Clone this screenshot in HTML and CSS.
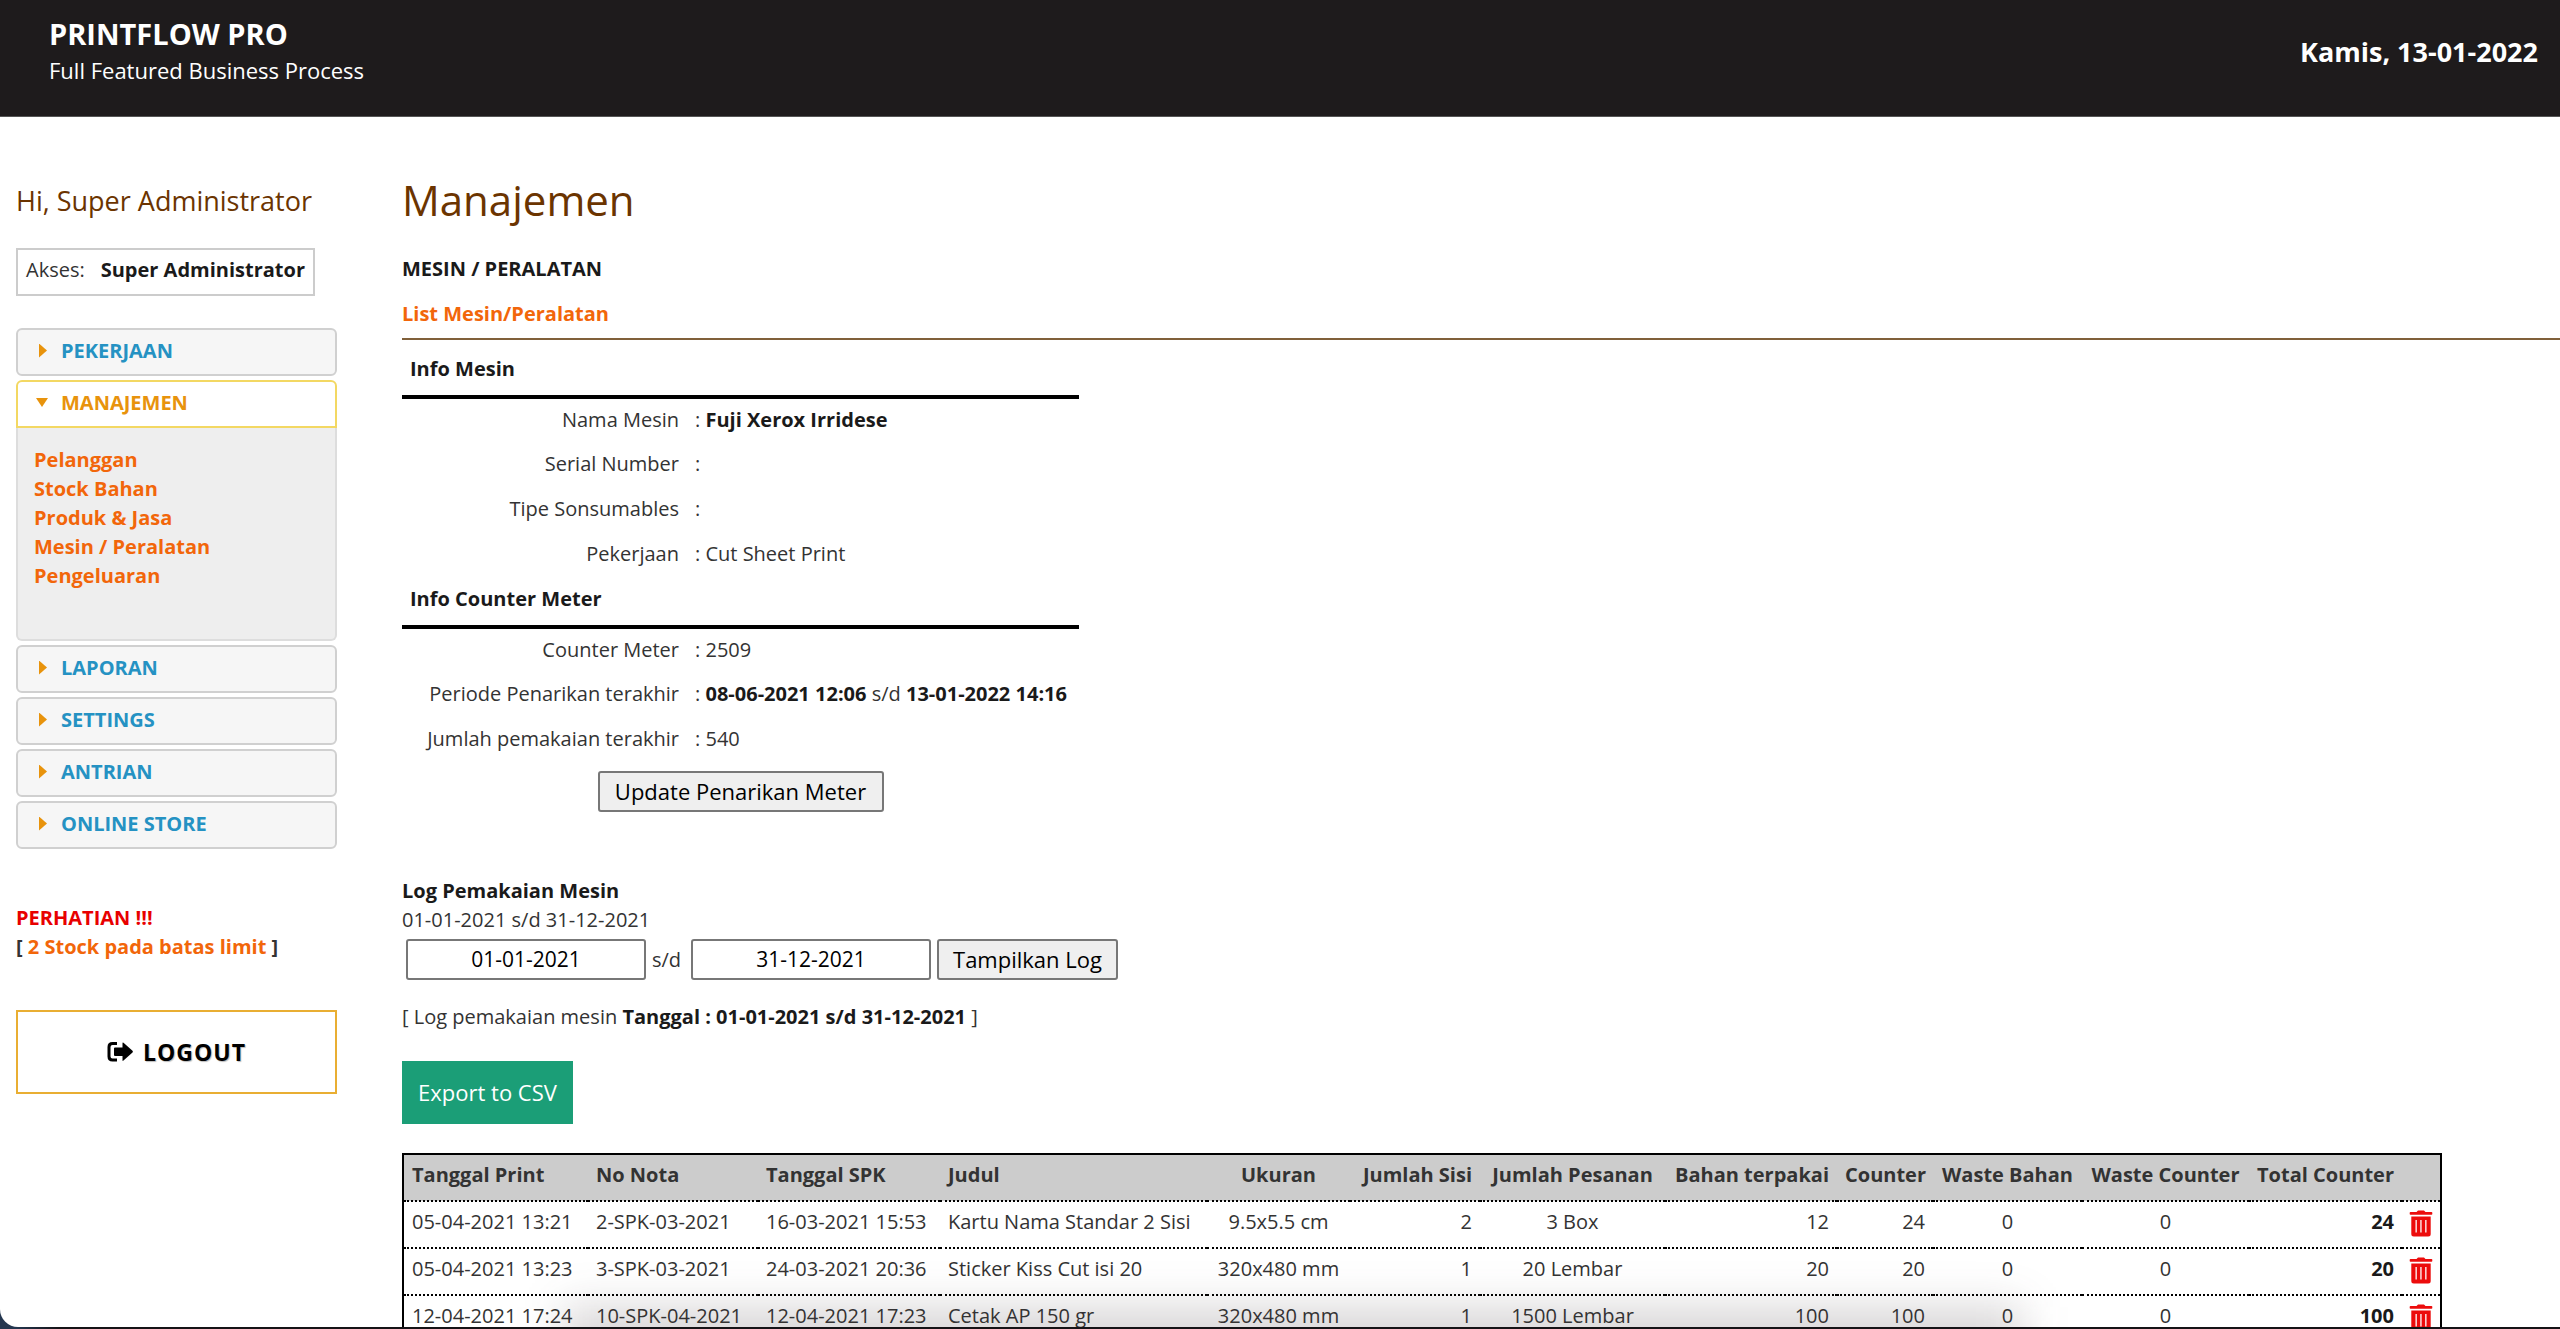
FILE: index.html
```
<!DOCTYPE html>
<html lang="id">
<head>
<meta charset="utf-8">
<title>Printflow Pro - Manajemen</title>
<link rel="stylesheet" href="styles.css">
</head>
<body>
<svg width="0" height="0" class="sprite" aria-hidden="true">
  <symbol id="trash" viewBox="0 0 24 27">
    <path fill="#ec0c0c" fill-rule="evenodd" d="M1.500 2H7.500L9 .5h6L16.500 2h6q.8 0 .8.800V4q0 .8-.8.800h-21Q.7 4.800.7 4V2.800Q.7 2 1.500 2ZM2.300 6.400h19.400v17.600q0 2.500-2.500 2.500H4.800Q2.300 26.500 2.300 24ZM6.500 10v12.500h1.300V10ZM11.300 10v12.500h1.300V10ZM16.200 10v12.500h1.300V10Z"/>
  </symbol>
</svg>
<div class="window">
  <header class="topbar">
    <div>
      <h1 class="brand">PRINTFLOW PRO</h1>
      <p class="tagline">Full Featured Business Process</p>
    </div>
    <p class="today">Kamis, 13-01-2022</p>
  </header>

  <div class="layout">
    <aside class="sidebar">
      <h2 class="greeting">Hi, Super Administrator</h2>
      <p class="access"><span>Akses:</span><b>Super Administrator</b></p>

      <nav class="menu">
        <button type="button" class="menu-head"><span class="arrow"></span>PEKERJAAN</button>
        <div class="menu-group">
          <button type="button" class="menu-head open" aria-expanded="true"><span class="arrow down"></span>MANAJEMEN</button>
          <div class="menu-panel">
            <a href="#pelanggan">Pelanggan</a>
            <a href="#stock">Stock Bahan</a>
            <a href="#produk">Produk &amp; Jasa</a>
            <a href="#mesin">Mesin / Peralatan</a>
            <a href="#pengeluaran">Pengeluaran</a>
          </div>
        </div>
        <button type="button" class="menu-head"><span class="arrow"></span>LAPORAN</button>
        <button type="button" class="menu-head"><span class="arrow"></span>SETTINGS</button>
        <button type="button" class="menu-head"><span class="arrow"></span>ANTRIAN</button>
        <button type="button" class="menu-head"><span class="arrow"></span>ONLINE STORE</button>
      </nav>

      <div class="notice">
        <p class="alert">PERHATIAN !!!</p>
        <p>[ <a href="#limit">2 Stock pada batas limit</a> ]</p>
      </div>

      <button type="button" class="logout">
        <svg width="27" height="22" viewBox="0 0 27 22" aria-hidden="true">
          <path d="M10 2.500H5.500Q2 2.500 2 6v9.500Q2 19 5.500 19H10" fill="none" stroke="#000" stroke-width="3"/>
          <path d="M8 6.500h7.500V2.200q0-1.200 1-.4l9 8q.9.900 0 1.800l-9 8q-1 .8-1-.4V15H8q-1 0-1-1V7.500q0-1 1-1Z"/>
        </svg>
        LOGOUT
      </button>
    </aside>

    <main class="content">
      <h2 class="page-title">Manajemen</h2>
      <h3 class="section">MESIN / PERALATAN</h3>
      <p class="crumb"><a href="#list">List Mesin/Peralatan</a></p>

      <table class="info">
        <colgroup><col class="info-label"><col class="info-value"></colgroup>
        <tbody>
          <tr><th colspan="2" class="info-head">Info Mesin</th></tr>
          <tr><th scope="row">Nama Mesin</th><td>: <b>Fuji Xerox Irridese</b></td></tr>
          <tr><th scope="row">Serial Number</th><td>:</td></tr>
          <tr><th scope="row">Tipe Sonsumables</th><td>:</td></tr>
          <tr><th scope="row">Pekerjaan</th><td>: Cut Sheet Print</td></tr>
          <tr><th colspan="2" class="info-head">Info Counter Meter</th></tr>
          <tr><th scope="row">Counter Meter</th><td>: 2509</td></tr>
          <tr><th scope="row">Periode Penarikan terakhir</th><td>: <b>08-06-2021 12:06</b> s/d <b>13-01-2022 14:16</b></td></tr>
          <tr><th scope="row">Jumlah pemakaian terakhir</th><td>: 540</td></tr>
          <tr><td colspan="2" class="info-action"><button type="button" class="btn btn-update">Update Penarikan Meter</button></td></tr>
        </tbody>
      </table>

      <h3 class="log-title">Log Pemakaian Mesin</h3>
      <p>01-01-2021 s/d 31-12-2021</p>
      <form class="filter">
        <input type="text" id="from" value="01-01-2021" aria-label="Tanggal awal">
        <label for="to">s/d</label>
        <input type="text" id="to" value="31-12-2021">
        <button type="button" class="btn btn-show">Tampilkan Log</button>
      </form>
      <p class="period">[ Log pemakaian mesin <b>Tanggal : 01-01-2021 s/d 31-12-2021</b> ]</p>
      <button type="button" class="export">Export to CSV</button>

      <table class="log">
        <colgroup>
          <col class="c-print"><col class="c-nota"><col class="c-spk"><col class="c-judul"><col class="c-ukuran"><col class="c-sisi"><col class="c-pesanan"><col class="c-bahan"><col class="c-counter"><col class="c-wbahan"><col class="c-wcounter"><col class="c-total"><col class="c-del">
        </colgroup>
        <thead>
          <tr><th>Tanggal Print</th><th>No Nota</th><th>Tanggal SPK</th><th>Judul</th><th class="mid">Ukuran</th><th class="num">Jumlah Sisi</th><th class="mid">Jumlah Pesanan</th><th class="num">Bahan terpakai</th><th class="num">Counter</th><th class="mid">Waste Bahan</th><th class="mid">Waste Counter</th><th class="num">Total Counter</th><th></th></tr>
        </thead>
        <tbody>
          <tr><td>05-04-2021 13:21</td><td>2-SPK-03-2021</td><td>16-03-2021 15:53</td><td>Kartu Nama Standar 2 Sisi</td><td class="mid">9.5x5.5 cm</td><td class="num">2</td><td class="mid">3 Box</td><td class="num">12</td><td class="num">24</td><td class="mid">0</td><td class="mid">0</td><td class="num"><b>24</b></td><td class="del"><a href="#hapus-1" aria-label="Hapus"><svg width="24" height="27"><use href="#trash"/></svg></a></td></tr>
          <tr><td>05-04-2021 13:23</td><td>3-SPK-03-2021</td><td>24-03-2021 20:36</td><td>Sticker Kiss Cut isi 20</td><td class="mid">320x480 mm</td><td class="num">1</td><td class="mid">20 Lembar</td><td class="num">20</td><td class="num">20</td><td class="mid">0</td><td class="mid">0</td><td class="num"><b>20</b></td><td class="del"><a href="#hapus-2" aria-label="Hapus"><svg width="24" height="27"><use href="#trash"/></svg></a></td></tr>
          <tr><td>12-04-2021 17:24</td><td>10-SPK-04-2021</td><td>12-04-2021 17:23</td><td>Cetak AP 150 gr</td><td class="mid">320x480 mm</td><td class="num">1</td><td class="mid">1500 Lembar</td><td class="num">100</td><td class="num">100</td><td class="mid">0</td><td class="mid">0</td><td class="num"><b>100</b></td><td class="del"><a href="#hapus-3" aria-label="Hapus"><svg width="24" height="27"><use href="#trash"/></svg></a></td></tr>
        </tbody>
      </table>
    </main>
  </div>
  <div class="dock-shadow"></div>
</div>
</body>
</html>
```
FILE: styles.css
```
* { box-sizing: border-box; }

body {
  margin: 0;
  background: linear-gradient(90deg, #24364f 0, #24364f 16px, #151316 60px);
  color: #333;
  font: 20px/29px "Open Sans", "Noto Sans", sans-serif;
}

h1, h2, h3, p { margin: 0; }
h1, h2, h3 { font-size: 20px; }
b, h3 { font-weight: 700; color: #1a1a1a; }
button, input { font-family: inherit; }
a { color: #f2660a; font-weight: 700; text-decoration: none; }

.sprite { position: absolute; }

/* browser frame: rounded at the lower left, dark desktop edge below */
.window {
  position: relative;
  height: calc(100vh - 2px);
  overflow: hidden;
  background: #fff;
  border-bottom-left-radius: 18px;
}

/* soft shadow cast by the dock over the page's lower edge */
.dock-shadow {
  position: absolute;
  left: 22%;
  right: 21%;
  bottom: -60px;
  height: 80px;
  background: rgba(60, 50, 55, .2);
  filter: blur(22px);
  pointer-events: none;
}

/* top bar */
.topbar {
  display: flex;
  justify-content: space-between;
  align-items: center;
  padding: 16px 22px 28px 49px;
  border-bottom: 1px solid #555;
  background: #1e1b1c;
  color: #fff;
}
.brand { font-size: 29px; line-height: 36px; }
.tagline { font-size: 22px; line-height: 36px; }
.today { font-size: 27px; line-height: 36px; font-weight: 700; }

.layout { display: flex; gap: 65px; padding-left: 16px; }

/* sidebar */
.sidebar { flex: 0 0 321px; padding-top: 64px; }
.greeting { color: #6b3400; font-size: 27px; line-height: 40px; font-weight: 400; white-space: nowrap; }
.access {
  display: inline-flex;
  gap: 16px;
  margin-top: 27px;
  padding: 5px 8px 10px;
  border: 2px solid #ccc;
  white-space: nowrap;
}
.menu { display: flex; flex-direction: column; gap: 4px; margin-top: 32px; }
.menu-head {
  display: flex;
  align-items: center;
  gap: 14px;
  width: 100%;
  height: 48px;
  padding: 0 21px 3px;
  border: 2px solid #d0d0d0;
  border-radius: 6px;
  background: #f6f6f6;
  color: #2592c3;
  font-size: 20px;
  font-weight: 700;
}
.menu-head.open {
  border-color: #f3d863;
  border-radius: 6px 6px 0 0;
  background: #fff;
  color: #e8930c;
}
.arrow { width: 8px; height: 14px; background: #e8930c; clip-path: polygon(0 0, 100% 50%, 0 100%); }
.arrow.down { width: 12px; height: 9px; margin: 0 -1px 0 -3px; clip-path: polygon(0 0, 100% 0, 50% 100%); }
.menu-panel {
  display: flex;
  flex-direction: column;
  padding: 17px 16px 49px;
  border: 2px solid #ddd;
  border-top: 0;
  border-radius: 0 0 6px 6px;
  background: #eee;
}

.notice { margin-top: 54px; color: #333; font-weight: 700; }
.notice .alert { color: #e80000; }
.logout {
  display: flex;
  justify-content: center;
  align-items: center;
  gap: 9px;
  width: 100%;
  height: 84px;
  margin-top: 49px;
  border: 2px solid #e9ae32;
  background: #fff;
  color: #000;
  font-size: 23px;
  font-weight: 700;
  letter-spacing: 1px;
  text-shadow: 1px 1px 1px #bbb;
}

/* content */
.content { flex: 1; min-width: 0; padding-top: 55px; }
.page-title { color: #6b3400; font-size: 42px; line-height: 56px; font-weight: 400; }
.section { margin-top: 26px; }
.crumb { margin-top: 16px; padding-bottom: 10px; border-bottom: 2px solid #80603a; }

.info { margin-top: 7px; border-collapse: collapse; table-layout: fixed; width: 677px; }
.info-label { width: 285px; }
.info-value { width: 392px; }
.info th, .info td { height: 45px; padding: 0 8px 3px; white-space: nowrap; text-align: left; font-weight: 400; }
.info th { text-align: right; }
.info .info-head {
  height: 50px;
  padding-bottom: 5px;
  border-bottom: 4px solid #000;
  color: #1a1a1a;
  font-weight: 700;
  text-align: left;
}
.info .info-action { padding: 9px 0 0; text-align: center; }

.btn {
  height: 41px;
  padding: 0 0 2px;
  border: 2px solid #777;
  border-radius: 3px;
  background: #efefef;
  color: #000;
  font-size: 22px;
  vertical-align: top;
}
.btn-update { width: 286px; }
.btn-show { width: 181px; }

.log-title { margin-top: 64px; }
.filter { display: flex; align-items: center; gap: 6px; margin-top: 5px; padding-left: 4px; }
.filter label { width: 33px; }
.filter input {
  width: 240px;
  height: 41px;
  padding: 0 4px 2px;
  border: 2px solid #777;
  border-radius: 3px;
  color: #000;
  font-size: 21px;
  text-align: center;
}
.period { margin-top: 22px; }
.export {
  width: 171px;
  height: 63px;
  margin-top: 30px;
  padding: 0 0 2px;
  border: 0;
  background: #1b9e77;
  color: #fff;
  font-size: 22px;
}

/* usage log */
.log { margin-top: 29px; border: 2px solid #000; border-collapse: collapse; table-layout: fixed; width: 2038px; }
.log th, .log td {
  padding: 5px 8px 11px;
  border-bottom: 2px dotted #000;
  text-align: left;
  white-space: nowrap;
}
.log th { background: #ccc; font-weight: 700; }
.log .mid { text-align: center; }
.log .num { text-align: right; }
.log .del { padding: 0 4px 2px; text-align: center; }
.log svg { display: block; margin: 0 auto; }
.c-print { width: 185px; }
.c-nota { width: 170px; }
.c-spk { width: 182px; }
.c-judul { width: 267px; }
.c-ukuran { width: 143px; }
.c-sisi { width: 130px; }
.c-pesanan { width: 185px; }
.c-bahan { width: 172px; }
.c-counter { width: 96px; }
.c-wbahan { width: 149px; }
.c-wcounter { width: 167px; }
.c-total { width: 153px; }
.c-del { width: 39px; }
```
